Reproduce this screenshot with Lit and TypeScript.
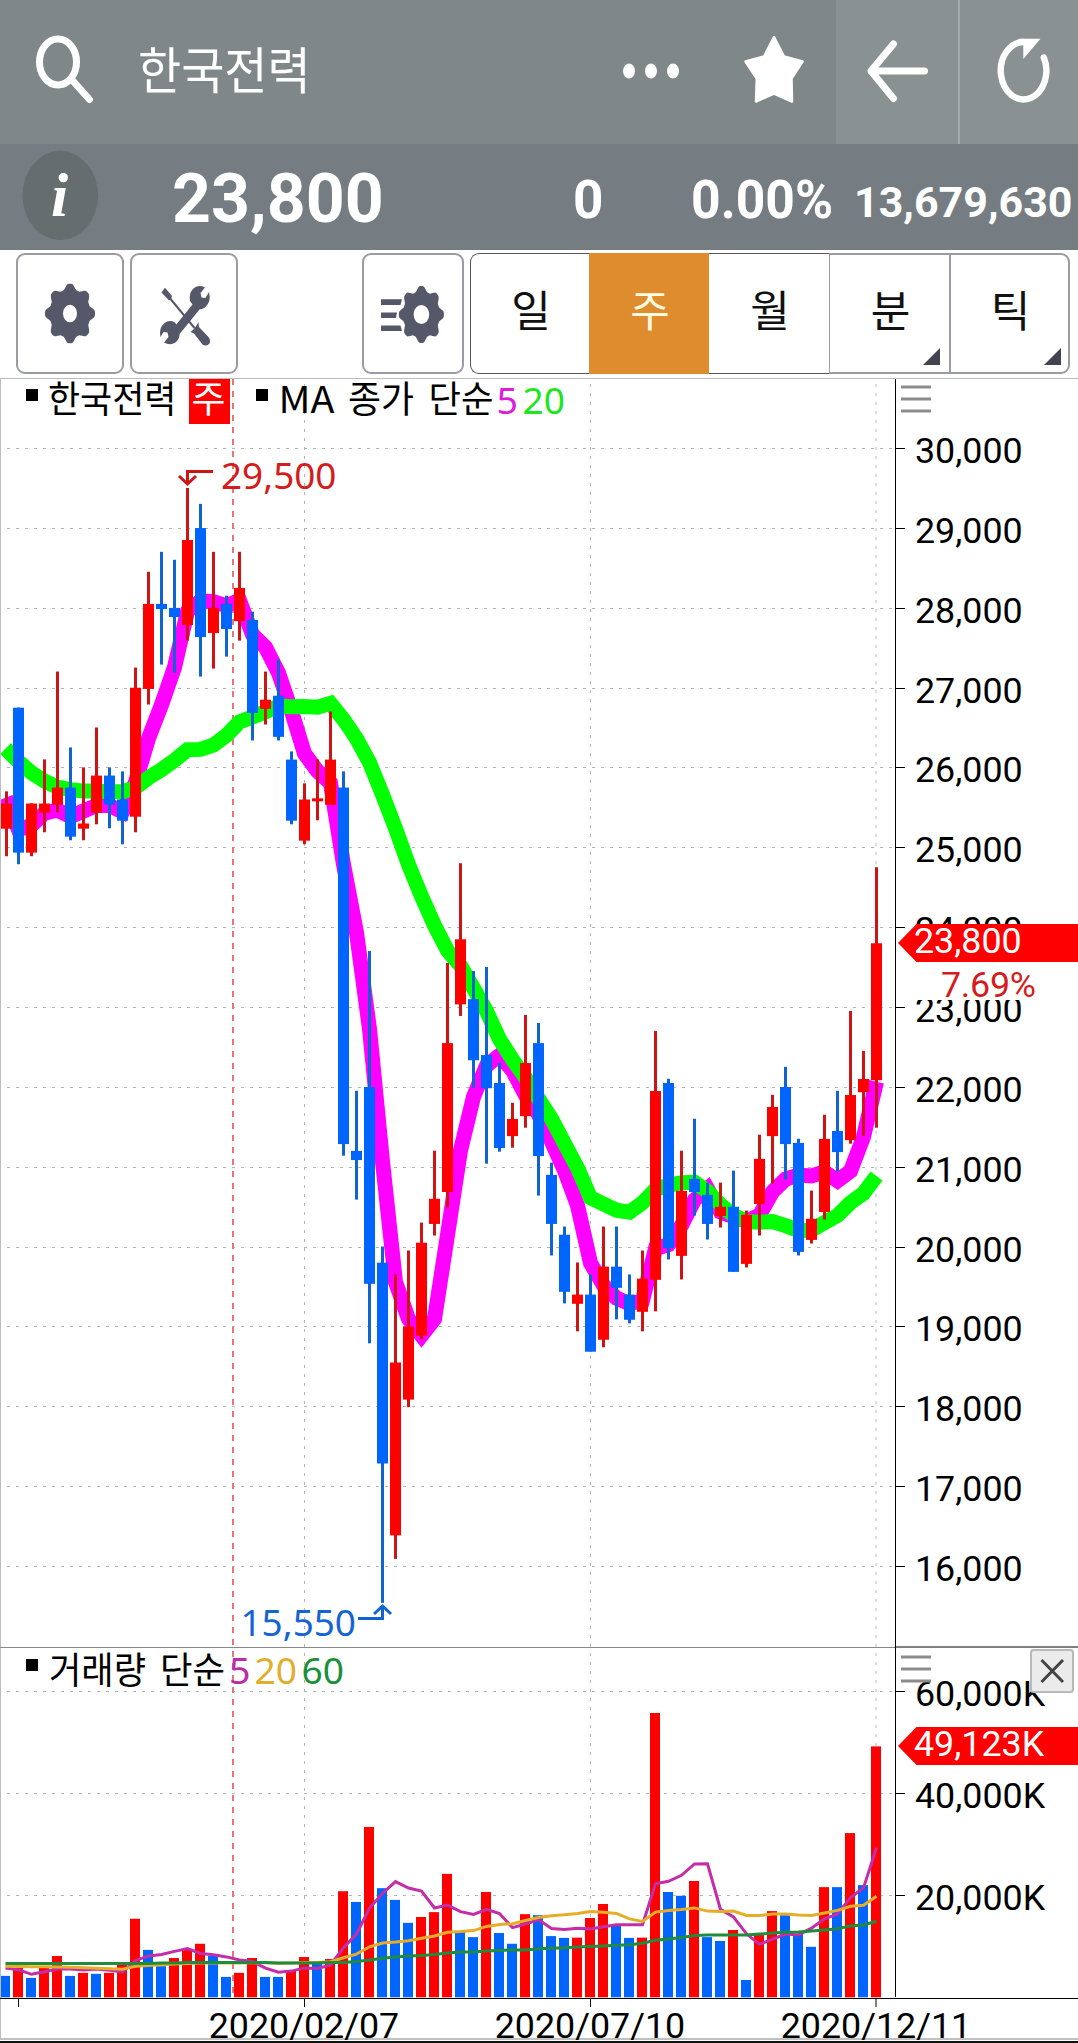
import { LitElement, html, svg, css, nothing } from "lit";
import { customElement } from "lit/decorators.js";

type Candle = [high: number, top: number, bottom: number, low: number, up: 0 | 1];

/* Weekly candles: high, body top, body bottom, low, direction (1 = rising). */
const CANDLES: Candle[] = [
  [25700, 25550, 25250, 24900, 1], [26750, 26750, 24950, 24800, 0], [25550, 25550, 24950, 24900, 1],
  [26100, 25550, 25450, 25200, 1], [27200, 25750, 25550, 25450, 1], [26250, 25750, 25150, 25100, 0],
  [26000, 25300, 25250, 25100, 1], [26500, 25900, 25450, 25300, 1], [26000, 25900, 25550, 25250, 0],
  [25950, 25600, 25350, 25050, 0], [27250, 27000, 25400, 25200, 1], [28450, 28050, 27000, 26800, 1],
  [28700, 28050, 28000, 27300, 0], [28600, 28000, 27900, 27200, 0], [29500, 28850, 27800, 27600, 1],
  [29300, 29000, 27650, 27150, 0], [28700, 28000, 27700, 27250, 1], [28150, 28050, 27750, 27400, 0],
  [28700, 28250, 27850, 27600, 1], [27950, 27850, 26700, 26350, 0], [27200, 26850, 26750, 26550, 1],
  [27350, 26900, 26400, 26350, 0], [26200, 26100, 25350, 25300, 0], [25800, 25600, 25100, 25050, 1],
  [26100, 25600, 25600, 25350, 1], [26700, 26100, 25550, 25550, 1], [25950, 25750, 21300, 21150, 0],
  [21950, 21200, 21100, 20600, 0], [23700, 22000, 19550, 18800, 0], [20000, 19800, 17300, 15550, 0],
  [19650, 18550, 16400, 16100, 1], [19950, 19000, 18100, 18000, 1], [20300, 20050, 18900, 18850, 1],
  [21200, 20600, 20300, 20150, 1], [23550, 22550, 20700, 20500, 1], [24800, 23850, 23050, 22900, 1],
  [23450, 23100, 22350, 22000, 0], [23500, 22400, 22000, 21050, 0], [22300, 22050, 21250, 21200, 0],
  [21800, 21600, 21400, 21250, 1], [22900, 22300, 21650, 21500, 1], [22800, 22550, 21150, 20650, 0],
  [21050, 20900, 20300, 19900, 0], [20250, 20150, 19450, 19300, 0], [19800, 19400, 19300, 18950, 1],
  [19650, 19400, 18700, 18700, 0], [20250, 19750, 18850, 18750, 1], [20250, 19750, 19500, 19100, 0],
  [19650, 19400, 19100, 19050, 0], [19950, 19600, 19200, 18950, 1], [22700, 21950, 19600, 19200, 1],
  [22100, 22050, 20000, 19850, 0], [21200, 20700, 19900, 19600, 1], [21600, 20850, 20700, 20400, 0],
  [20800, 20650, 20300, 20100, 0], [20800, 20500, 20400, 20250, 1], [20950, 20500, 19700, 19700, 0],
  [20450, 20400, 19800, 19750, 1], [21400, 21100, 20550, 20150, 1], [21900, 21750, 21400, 20800, 1],
  [22250, 22000, 21300, 20850, 0], [21350, 21300, 19950, 19900, 0], [20700, 20350, 20100, 20050, 1],
  [21650, 21350, 20450, 20350, 1], [21950, 21450, 21200, 20950, 0], [22950, 21900, 21350, 21300, 1],
  [22450, 22100, 21950, 21400, 1], [24750, 23800, 22100, 21500, 1],
];

/* Weekly volume in millions of shares. */
const VOLUME = [
  4.2, 5.75, 3.8, 5.9, 8.1, 4.2, 4.8, 4.6, 4.8, 6.5, 15.4, 9.3, 6.1, 7.7, 9.3, 10.5, 8.1, 4, 4.8, 7.7, 4, 4,
  5.2, 7.9, 7.1, 7.5, 20.8, 18.7, 33.4, 21.4, 19.1, 14.6, 15.75, 16.7, 24.2, 12.8, 11.8, 20.65, 12.6, 10.5,
  16.3, 16.1, 12, 11.65, 11.7, 15.55, 18.3, 14, 11.65, 11.7, 55.75, 20.65, 19.9, 22.8, 11.8, 11.05, 13.2, 3.4,
  12.4, 16.9, 16.1, 12.4, 9.9, 21.6, 21.6, 32.2, 22, 49.2,
];

/* Averages whose window starts before the first visible week. */
const PRICE_MA5_HEAD = [25627, 25226, 25280, 25434];
const PRICE_MA20_HEAD = [
  26240, 26080, 25940, 25835, 25760, 25727, 25710, 25710, 25702, 25702, 25752, 25877, 25977, 26094, 26228,
  26232, 26287, 26408, 26575,
];
const VOL_MA5_HEAD = [5.75, 5.4, 4.5, 5];
const VOL_MA20_HEAD = [
  6.1, 6.05, 6, 6, 5.95, 5.9, 5.8, 5.7, 5.6, 5.5, 6.1, 6.25, 6.4, 6.5, 6.6, 6.7, 6.75, 6.7, 6.75,
];
const VOL_MA60 = [
  6.6, 6.6, 6.6, 6.6, 6.6, 6.6, 6.6, 6.6, 6.6, 6.6, 6.6, 6.6, 6.7, 6.75, 6.8, 6.8, 6.8, 6.8, 6.8, 6.85, 6.8,
  6.7, 6.7, 6.7, 6.75, 6.8, 6.8, 7, 7.3, 7.65, 7.9, 8.1, 8.2, 8.4, 8.7, 8.9, 8.9, 9.1, 9.2, 9.3, 9.3, 9.5,
  9.6, 9.7, 9.85, 9.95, 10.05, 10.2, 10.3, 10.6, 11.2, 11.45, 11.75, 12.1, 12.2, 12.2, 12.2, 12.2, 12.4,
  12.6, 12.75, 12.8, 13, 13.2, 13.45, 14, 14.2, 14.9,
];

const xAt = (i: number) => 5.5 + 13 * i;
const priceY = (p: number) => 448.5 + (30000 - p) * 0.07985;
const volY = (v: number) => 1997.3 - v * 5.1;

const average = (values: number[], span: number, head: number[]) =>
  values.map((_, i) =>
    i < span - 1 ? head[i] : values.slice(i - span + 1, i + 1).reduce((a, b) => a + b, 0) / span,
  );
const points = (values: number[], y: (v: number) => number) =>
  values.map((v, i) => `${xAt(i)},${y(v).toFixed(1)}`).join(" ");

const CLOSES = CANDLES.map(([, top, bottom, , up]) => (up ? top : bottom));
const PRICE_TICKS = Array.from({ length: 15 }, (_, i) => 30000 - i * 1000);

const gearPath = (cx: number, cy: number, rx: number, ry: number, hx: number, hy: number) => {
  const pts: string[] = [];
  for (let a = 0; a < 360; a += 3) {
    const t = (a * Math.PI) / 180;
    const wave = Math.max(-1, Math.min(1, Math.cos(8 * t) * 1.3));
    const r = 0.91 + 0.09 * wave;
    pts.push(`${(cx + rx * r * Math.cos(t)).toFixed(2)} ${(cy + ry * r * Math.sin(t)).toFixed(2)}`);
  }
  return `M${pts.join("L")}ZM${cx - hx} ${cy}a${hx} ${hy} 0 1 0 ${2 * hx} 0a${hx} ${hy} 0 1 0 ${-2 * hx} 0Z`;
};

@customElement("quote-header")
class QuoteHeader extends LitElement {
  static styles = css`
    :host { display: block; color: #fff; }
    .top { display: flex; height: 144px; background: #7f8789; }
    .top svg { display: block; flex: none; }
    .lead { display: flex; width: 598px; }
    .name { width: 460px; font: 400 50px/134px "Noto Sans CJK KR", sans-serif; white-space: nowrap; }
    .name span { display: inline-block; transform: scaleX(0.938); transform-origin: 0 50%; }
    .cell { background: #899193; }
    .cell + .cell { border-left: 2px solid #a3a9ab; }
    .quote {
      display: flex; height: 106px; background: #757d83; overflow: hidden;
      font-family: Roboto, sans-serif; font-weight: 700; white-space: nowrap;
    }
    .quote svg { flex: none; display: block; }
    .info-i { font: italic 700 62px "Liberation Serif", serif; fill: #fff; }
    .price { width: 401px; font-size: 69px; line-height: 110px; }
    .price span, .rate span { display: inline-block; transform-origin: 0 50%; }
    .price span { transform: scaleX(0.985); }
    .diff { width: 118px; font-size: 53px; line-height: 113px; }
    .rate { width: 163px; font-size: 53px; line-height: 113px; }
    .rate span { transform: scaleX(0.975); }
    .amount { width: 217px; font-size: 43px; line-height: 116px; overflow: hidden; }
  `;

  render() {
    return html`
      <div class="top">
        <div class="lead">
          <svg width="138" height="144" viewBox="0 0 138 144" fill="none" stroke="#fff" stroke-width="7">
            <ellipse cx="58" cy="62" rx="18.5" ry="23" />
            <path d="M73 81L89.500 99.500" stroke-linecap="round" />
          </svg>
          <div class="name"><span>한국전력</span></div>
        </div>
        <svg width="238" height="144" viewBox="598 0 238 144" fill="#fff">
          <ellipse cx="629" cy="71" rx="6" ry="7.400" />
          <ellipse cx="651" cy="71" rx="6" ry="7.400" />
          <ellipse cx="673" cy="71" rx="6" ry="7.400" />
          <path
            d="M774 37L784 56.500L802.500 61.500L791.500 78.500L792 101.500L774 93.500L756 101.500L756.800 78.500L745.500 61.500L764 56.500Z"
            stroke="#fff" stroke-width="2.500" stroke-linejoin="round"
          />
        </svg>
        <div class="cell">
          <svg width="122" height="144" viewBox="836 0 122 144" fill="none" stroke="#fff" stroke-width="7" stroke-linecap="round" stroke-linejoin="round">
            <path d="M893.500 44L871 71L893.500 98.500M871 71H924.500" />
          </svg>
        </div>
        <div class="cell">
          <svg width="118" height="144" viewBox="960 0 118 144">
            <path d="M1043.800 57.500A22.800 28.700 0 1 1 1023.600 42" fill="none" stroke="#fff" stroke-width="6.400" stroke-linecap="round" />
            <path d="M1019 38.800H1040.500L1023.300 59V44Z" fill="#fff" />
          </svg>
        </div>
      </div>
      <div class="quote">
        <svg width="172" height="106" viewBox="0 144 172 106">
          <ellipse cx="60.300" cy="195.500" rx="37.800" ry="44.700" fill="#656d6f" />
          <text class="info-i" x="51" y="216">i</text>
        </svg>
        <div class="price"><span>23,800</span></div>
        <div class="diff">0</div>
        <div class="rate"><span>0.00%</span></div>
        <div class="amount">13,679,630</div>
      </div>
    `;
  }
}

@customElement("chart-toolbar")
class ChartToolbar extends LitElement {
  static styles = css`
    :host {
      display: flex; box-sizing: border-box; height: 128px; padding: 3px 8px 4px 16px; align-items: flex-start;
      background: #fff;
    }
    .tool {
      box-sizing: border-box; width: 108px; height: 121px; border: 2px solid #9a9ba3; border-radius: 9px;
      margin-right: 6px;
    }
    .tool svg { display: block; }
    .list { width: 102px; margin-left: 118px; }
    .periods { display: flex; height: 121px; }
    .period {
      box-sizing: border-box; width: 120px; height: 121px; border: 1px solid #55565a; border-width: 1px 0;
      font: 400 43px/109px "Noto Sans CJK KR", sans-serif; color: #111; text-align: center; padding-left: 2px;
    }
    .period.first { width: 119px; border-left-width: 1px; border-radius: 9px 0 0 9px; }
    .period.active { background: #df8c2e; border-color: #df8c2e; color: #fffbe0; }
    .period.menu { display: grid; border: 2px solid #9a9ba3; border-right: 0; line-height: 107px; }
    .period.menu.start { border-left-width: 1px; }
    .period.menu.last { width: 121px; border-right: 2px solid #9a9ba3; border-radius: 0 9px 9px 0; }
    .period.menu span, .period.menu i { grid-area: 1 / 1; }
    .period.menu i {
      align-self: end; justify-self: end; width: 17px; height: 17px; margin: 0 9px 7px 0; background: #42434f;
      clip-path: polygon(100% 0, 100% 100%, 0 100%);
    }
    .period.menu.last i { margin-right: 7px; }
  `;

  render() {
    return html`
      <div class="tool">
        <svg width="104" height="117" viewBox="18 255 104 117">
          <path fill="#555869" fill-rule="evenodd" d=${gearPath(70, 313.5, 25, 29.7, 7, 8.7)} />
        </svg>
      </div>
      <div class="tool">
        <svg width="104" height="117" viewBox="132 255 104 117" fill="#555869">
          <path d="M161.500 292.500L165 287.800L172 296L170.800 299.500L169 300.500Z" />
          <path d="M168.500 296.500L194.500 328" stroke="#555869" stroke-width="2" />
          <path d="M190.500 332L193 330L196.500 325.500L198.500 322.200L199 327L208.500 337Q211 340.500 209.500 343.500Q206.500 347 202.500 344.500L194 333.500Z" />
          <path d="M176.500 331L200.500 301.500" stroke="#555869" stroke-width="8.500" />
          <path d="M205 287.500L200.500 293L201.500 297.500L205.500 298L209 292Q211.500 302 205 307.500Q200 311 194.500 307L190 301Q188.500 292 194 288Q199 284.500 205 287.500Z" />
          <path d="M164 342.500L168.500 337L167.500 332.500L163.500 332L160.500 337Q158.500 328 164.500 323Q169.500 319.500 175 322.500L179.500 329Q181 338 175.500 342.500Q170 346 164 342.500Z" />
        </svg>
      </div>
      <div class="tool list">
        <svg width="98" height="117" viewBox="364 255 98 117">
          <path fill="#555869" d="M381 299.300h21l-1.500 5.700h-19.500zM381 312.500h16l-1 5.500h-15zM381 325.500h19.500l1.500 5.500h-21z" />
          <path fill="#555869" fill-rule="evenodd" d=${gearPath(421.4, 314.5, 22.5, 28.5, 7.8, 9.6)} />
        </svg>
      </div>
      <div class="periods">
        <div class="period first">일</div>
        <div class="period active">주</div>
        <div class="period">월</div>
        <div class="period menu start"><span>분</span><i></i></div>
        <div class="period menu last"><span>틱</span><i></i></div>
      </div>
    `;
  }
}

@customElement("stock-chart")
class StockChart extends LitElement {
  static styles = css`
    :host { display: block; }
    svg { display: block; }
    .axis { font: 400 35.8px Roboto, sans-serif; fill: #000; }
    .mid { text-anchor: middle; }
    .kr { font: 400 37px "Noto Sans CJK KR", sans-serif; fill: #000; }
    .num { font: 400 37px "Noto Sans", sans-serif; }
    .grid { stroke: #b4b4b4; stroke-width: 1; stroke-dasharray: 3 6; fill: none; }
    .grid.soft { stroke: #dedede; stroke-width: 2; }
    .menu { stroke: #8c8c8c; stroke-width: 3; }
  `;

  private kr(x: number, y: number, length: number, text: string, fill = "#000") {
    return svg`<text class="kr" x=${x} y=${y} textLength=${length} lengthAdjust="spacingAndGlyphs" style=${
      fill === "#000" ? nothing : `fill:${fill}`
    }>${text}</text>`;
  }

  private num(x: number, y: number, length: number, text: string, fill: string) {
    return svg`<text class="num" x=${x} y=${y} textLength=${length} lengthAdjust="spacingAndGlyphs" fill=${fill}>${text}</text>`;
  }

  private grid() {
    return svg`
      ${PRICE_TICKS.map((p) => {
        const y = Math.floor(priceY(p)) + 0.5;
        return svg`<path class="grid" d="M7 ${y}H895" />`;
      })}
      ${[60, 40, 20].map((v) => svg`<path class="grid" d="M7 ${Math.floor(volY(v)) + 0.5}H895" />`)}
      ${[304.5, 590.5].map((x) => svg`<path class="grid" d="M${x} 384V1997" />`)}
      <path class="grid soft" d="M876 384V1997" />
      <path d="M233 379V1997" stroke="#e27878" stroke-width="2" stroke-dasharray="6 6" />
    `;
  }

  private candles() {
    return CANDLES.map(([high, top, bottom, low, up], i) => {
      const x = i === 0 ? 6.5 : xAt(i);
      const flat = top === bottom;
      const y = flat ? priceY(top) - 1.5 : priceY(top) - 0.3;
      const h = flat ? 3 : priceY(bottom) - priceY(top) + 1.2;
      return svg`
        <rect x=${x - 1.5} y=${priceY(high) - 0.5} width="3" height=${priceY(low) - priceY(high) + 1} fill=${up ? "#cc1616" : "#1064d0"} />
        <rect x=${x - 5.5} y=${y} width="11" height=${h} fill=${up ? "#ff0000" : "#0064ff"} />`;
    });
  }

  private volumes() {
    return VOLUME.map((v, i) => {
      const up = i > 0 && v > VOLUME[i - 1];
      return svg`<rect x=${xAt(i) - 5.5} y=${volY(v)} width="10" height=${v * 5.1} fill=${up ? "#ff0000" : "#0064ff"} />`;
    });
  }

  private priceAxis() {
    return svg`
      ${PRICE_TICKS.map((p) => {
        const y = Math.floor(priceY(p)) + 0.5;
        return svg`<path d="M896 ${y}H905" stroke="#000" />
          <text class="axis" x="915" y=${y + 14.2}>${p.toLocaleString("en-US")}</text>`;
      })}
      <rect x="910" y="962" width="168" height="38" fill="#fff" />
      <path d="M898 943L916.500 924H1078V962H916.500Z" fill="#ff0000" />
      <text class="axis" x="914" y="953" style="fill:#fff">23,800</text>
      <text class="axis" x="941" y="997.200" textLength="95" style="fill:#d41c1c">7.69%</text>
    `;
  }

  private volumeAxis() {
    return svg`
      ${[60, 40, 20].map((v) => {
        const y = Math.floor(volY(v)) + 0.5;
        return svg`<path d="M896 ${y}H905" stroke="#000" />
          <text class="axis" x="915" y=${y + 14.2}>${v},000K</text>`;
      })}
      <path d="M898 1746L916.500 1727H1078V1765H916.500Z" fill="#ff0000" />
      <text class="axis" x="914" y="1755.700" style="fill:#fff">49,123K</text>
      <rect x="1031" y="1650" width="42" height="42" rx="2.500" fill="#ebebeb" stroke="#b9b9b9" stroke-width="2" />
      <path d="M1041.500 1660L1063 1682M1063 1660L1041.500 1682" stroke="#444" stroke-width="3" />
    `;
  }

  render() {
    return html`
      <svg width="1078" height="1665" viewBox="0 378 1078 1665">
        <rect x="0" y="378" width="1078" height="1665" fill="#fff" />
        ${this.grid()}
        <g fill="none" stroke-width="15" stroke-linejoin="miter">
          <polyline points=${points(average(CLOSES, 5, PRICE_MA5_HEAD), priceY)} stroke="#ff00ff" />
          <polyline points=${points(average(CLOSES, 20, PRICE_MA20_HEAD), priceY)} stroke="#00ff00" />
        </g>
        ${this.candles()}
        ${this.volumes()}
        <g fill="none" stroke-width="3">
          <polyline points=${points(average(VOLUME, 5, VOL_MA5_HEAD), volY)} stroke="#c42ca8" />
          <polyline points=${points(average(VOLUME, 20, VOL_MA20_HEAD), volY)} stroke="#e6ae28" />
          <polyline points=${points(VOL_MA60, volY)} stroke="#1e8c3c" />
        </g>

        <g fill="none" stroke-width="3">
          <path d="M213 471.500H187.500V484M179 476L187.500 484L196 476" stroke="#cc1616" />
          <path d="M358 1618.500H382.500V1606M374 1614L382.500 1606L391 1614" stroke="#1064d0" />
        </g>
        ${this.num(221, 489, 115.5, "29,500", "#d41c1c")}
        ${this.num(240.5, 1635.5, 115.5, "15,550", "#1464d4")}

        <path d="M0.500 378V2040M0 378.500H1078" stroke="#bcbcbc" fill="none" />
        <path d="M0 1647.500H895" stroke="#888" />
        <path d="M896 1647H1078" stroke="#808080" stroke-width="2" />
        <path d="M895.500 379V1997" stroke="#000" />
        <path d="M0 1998.500H1078" stroke="#000" />
        ${this.priceAxis()}
        ${this.volumeAxis()}
        <path class="menu" d="M901 387H931M901 399H931M901 411H931M901 1657H931M901 1669H931M901 1681H931" />

        <rect x="26" y="389" width="12" height="12" />
        ${this.kr(48, 413, 128.5, "한국전력")}
        <rect x="189" y="379" width="41" height="45" fill="#ff0000" />
        ${this.kr(191.5, 413, 34, "주", "#fff")}
        <rect x="256" y="389" width="12" height="12" />
        ${this.kr(278.5, 413.3, 56, "MA")}
        ${this.kr(348, 413, 66, "종가")}
        ${this.kr(428.5, 413, 65, "단순")}
        ${this.num(496.5, 413.5, 21.5, "5", "#dc1edc")}
        ${this.num(522.5, 413.5, 42.5, "20", "#1ee61e")}

        <rect x="26" y="1659" width="12" height="12" />
        ${this.kr(49, 1683.5, 97, "거래량")}
        ${this.kr(160, 1683.5, 65, "단순")}
        ${this.num(229, 1683.5, 21.5, "5", "#bc2ca8")}
        ${this.num(254.5, 1683.5, 42.5, "20", "#e0ae2c")}
        ${this.num(301.5, 1683.5, 42.5, "60", "#1a903a")}

        <path d="M18.500 1999V2007M304.500 1999V2007M590.500 1999V2007" stroke="#000" />
        <path d="M876 1999V2007" stroke="#808080" stroke-width="2" />
        <rect x="0" y="2038" width="1078" height="2" fill="#c0c0c0" />
        <rect x="0" y="2041" width="1078" height="2" fill="#111" />
        <text class="axis mid" x="304" y="2037.700">2020/02/07</text>
        <text class="axis mid" x="590" y="2037.700">2020/07/10</text>
        <text class="axis mid" x="876" y="2037.700">2020/12/11</text>
      </svg>
    `;
  }
}

@customElement("app-root")
class AppRoot extends LitElement {
  static styles = css`
    :host { display: flex; flex-direction: column; width: 1078px; height: 2043px; overflow: hidden; background: #fff; }
  `;

  render() {
    return html`
      <quote-header></quote-header>
      <chart-toolbar></chart-toolbar>
      <stock-chart></stock-chart>
    `;
  }
}
